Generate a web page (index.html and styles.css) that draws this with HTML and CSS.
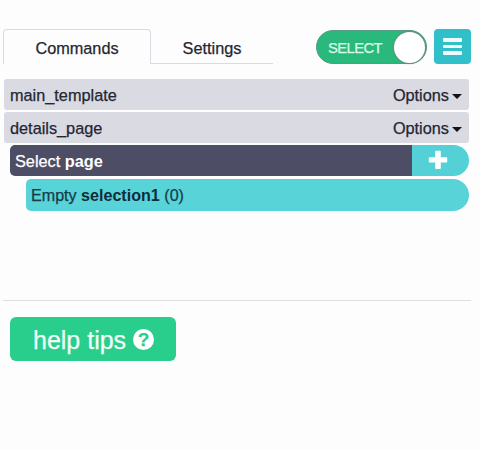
FILE: index.html
```html
<!DOCTYPE html>
<html lang="en">
<head>
<meta charset="utf-8">
<title>Commands</title>
<link rel="stylesheet" href="styles.css">
</head>
<body>
<header class="toolbar">
  <nav class="tabs">
    <div class="tab tab-active">Commands</div>
    <div class="tab">Settings</div>
  </nav>
  <div class="toggle"><span class="toggle-label">SELECT</span><span class="knob"></span></div>
  <div class="menu-button"><span></span><span></span><span></span></div>
</header>
<main class="commands">
  <div class="row template"><span>main_template</span><span class="options">Options<i class="caret"></i></span></div>
  <div class="row template"><span>details_page</span><span class="options">Options<i class="caret"></i></span></div>
  <div class="row select">
    <div class="select-name">Select <b>page</b></div>
    <div class="add">
      <svg width="20" height="20" viewBox="0 0 20 20"><path d="M8 .8h4q.8 0 .8.8v5.6h5.600q.8 0 .8.8v3.8q0 .8-.8.8h-5.600v5.600q0 .8-.8.8H8q-.8 0-.8-.8v-5.600H1.600q-.8 0-.8-.8V8q0-.8.8-.8h5.600V1.600Q7.200.8 8 .8z" fill="#fff"/></svg>
    </div>
  </div>
  <div class="row selection"><span>Empty <b>selection1</b> (0)</span></div>
</main>
<footer class="footer">
  <div class="help"><span>help tips</span><span class="question">?</span></div>
</footer>
</body>
</html>
```
FILE: styles.css
```css
* { box-sizing: border-box; }
body {
  margin: 0;
  width: 480px;
  height: 450px;
  overflow: hidden;
  background: #fdfdfe;
  color: #252632;
  font: 16.3px/20px "Liberation Sans", Arial, sans-serif;
  -webkit-text-stroke: 0.25px currentColor;
}
b { -webkit-text-stroke: 0; }
.toolbar {
  display: flex;
  padding: 29px 0 0 3px;
  height: 79px;
  align-items: flex-start;
}
.tabs { display: flex; width: 270px; }
.tab {
  width: 122px;
  height: 35px;
  padding-top: 9px;
  text-align: center;
  border-bottom: 1px solid #d9dae2;
}
.tab-active {
  width: 148px;
  padding-top: 8px;
  border: 1px solid #d9dae2;
  border-bottom: 0;
  border-radius: 4px 4px 0 0;
}
.toggle {
  display: flex;
  align-items: center;
  justify-content: space-between;
  width: 111px;
  height: 34px;
  margin: 1px 7px 0 43px;
  padding: 0 1px 0 11px;
  border-radius: 17px;
  background: #29b97d;
  border: 1px solid #579b80;
  color: #d9fbe9;
}
.toggle-label { font-size: 14.8px; letter-spacing: -0.6px; padding-top: 1px; }
.knob {
  width: 31px;
  height: 31px;
  border-radius: 50%;
  background: #fff;
  box-shadow: 0 0 1px 1px #698c7e;
}
.menu-button {
  display: flex;
  flex-direction: column;
  gap: 3px;
  width: 37px;
  height: 35px;
  padding: 9px 9px 0;
  border-radius: 4px;
  background: #31bfca;
}
.menu-button span { height: 3.5px; border-radius: 1px; background: #eefcff; }
.commands {
  display: flex;
  flex-direction: column;
  gap: 2px;
  height: 222px;
  margin: 0 9px 0 3px;
  border-bottom: 1px solid #dfdfe3;
}
.row {
  display: flex;
  align-items: center;
  justify-content: space-between;
  height: 31px;
}
.template {
  margin: 0 2px 0 1px;
  padding: 0 7px 0 6px;
  border-radius: 3px;
  background: #dadae3;
}
.options { display: flex; align-items: center; gap: 3px; }
.caret {
  border: 5px solid transparent;
  border-top: 5.5px solid #12131a;
  border-bottom: 0;
  margin-top: 3px;
}
.select { margin: 0 2px 0 7px; }
.select-name {
  flex: 1;
  height: 31px;
  padding: 6px 0 0 5px;
  border-radius: 5px 0 0 5px;
  background: #4d4d65;
  color: #fff;
}
.add {
  display: flex;
  align-items: center;
  width: 57px;
  height: 31px;
  padding: 0 0 1px 16px;
  border-radius: 0 16px 16px 0;
  background: #54d1d6;
}
.selection {
  height: 32px;
  margin: 1px 2px 0 23px;
  padding-left: 5px;
  border-radius: 5px 16px 16px 5px;
  background: #58d3d8;
  color: #173d49;
  font-size: 16.1px;
}
.selection b { color: #102d39; }
.footer { padding: 16px 10px; }
.help {
  display: flex;
  align-items: center;
  gap: 7px;
  width: 166px;
  height: 44px;
  padding: 1px 0 0 23px;
  border-radius: 6px;
  background: #29ce8c;
  color: #f1fff8;
  font-size: 25px;
}
.question {
  width: 21px;
  height: 21px;
  border-radius: 50%;
  background: #fff;
  color: #29ce8c;
  text-align: center;
  font: bold 19px/21px "Liberation Sans", Arial, sans-serif;
}
```
